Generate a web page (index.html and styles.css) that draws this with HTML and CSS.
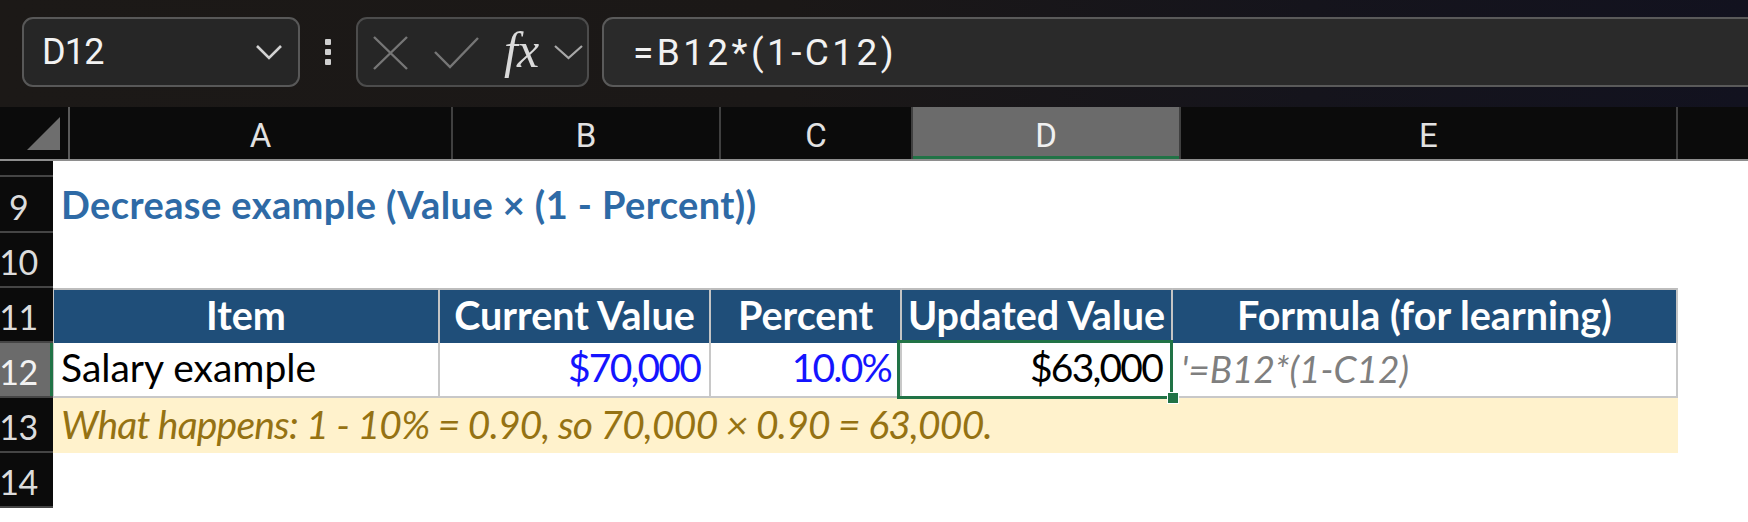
FILE: index.html
```html
<!DOCTYPE html>
<html>
<head>
<meta charset="utf-8">
<link rel="stylesheet" href="styles.css">
</head>
<body>
<div class="toolbar">
  <div class="namebox">
    <span class="name">D12</span>
    <svg class="chev" width="28" height="16" viewBox="0 0 28 16"><polyline points="2,2 14,14 26,2" fill="none" stroke="#d2d2d2" stroke-width="2.6"/></svg>
  </div>
  <div class="dots"><i></i><i></i><i></i></div>
  <div class="fnbox">
    <svg class="ic-x" width="35" height="34" viewBox="0 0 35 34"><path d="M1 1 L34 33 M34 1 L1 33" stroke="#767676" stroke-width="2.4" fill="none"/></svg>
    <svg class="ic-check" width="45" height="32" viewBox="0 0 45 32"><polyline points="1,15 16,30 44,1" fill="none" stroke="#767676" stroke-width="2.4"/></svg>
    <span class="fx">fx</span>
    <svg class="ic-chev2" width="29" height="15" viewBox="0 0 29 15"><polyline points="1,1 14.5,13 28,1" fill="none" stroke="#a8a8a8" stroke-width="2.2"/></svg>
  </div>
  <div class="formula"><span class="ftext">=B12*(1-C12)</span></div>
</div>

<div class="colheads">
  <div class="ch corner"><svg width="33" height="33" viewBox="0 0 33 33"><polygon points="33,0 33,33 0,33" fill="#6e6e6e"/></svg></div>
  <div class="ch w-a">A</div>
  <div class="ch w-b">B</div>
  <div class="ch w-c">C</div>
  <div class="ch w-d sel">D</div>
  <div class="ch w-e">E</div>
  <div class="ch w-rest"></div>
</div>

<div class="sheet">
  <div class="rh"></div>
  <div class="blank span6"></div>

  <div class="rh">9</div>
  <div class="cell title span6">Decrease example (Value × (1 - Percent))</div>

  <div class="rh">10</div>
  <div class="blank span6"></div>

  <div class="rh">11</div>
  <div class="cell th first">Item</div>
  <div class="cell th">Current Value</div>
  <div class="cell th">Percent</div>
  <div class="cell th">Updated Value</div>
  <div class="cell th">Formula (for learning)</div>
  <div class="blank"></div>

  <div class="rh rh-sel">12</div>
  <div class="cell td first">Salary example</div>
  <div class="cell td num blue">$70,000</div>
  <div class="cell td num blue">10.0%</div>
  <div class="cell td num active">$63,000<span class="handle"></span></div>
  <div class="cell td formula-text">'=B12*(1-C12)</div>
  <div class="blank"></div>

  <div class="rh">13</div>
  <div class="cell note span5">What happens: 1 - 10% = 0.90, so 70,000 × 0.90 = 63,000.</div>
  <div class="blank"></div>

  <div class="rh">14</div>
  <div class="blank span6"></div>
</div>
</body>
</html>
```

FILE: styles.css
```css
* {
  box-sizing: border-box;
  margin: 0;
  padding: 0;
}

html, body {
  width: 1748px;
  height: 522px;
  overflow: hidden;
  background: #ffffff;
}

body {
  font-family: Lato, "Liberation Sans", sans-serif;
}

/* ---------- formula toolbar ---------- */
.toolbar {
  height: 107px;
  display: flex;
  align-items: flex-start;
  padding: 17px 0 0 22px;
  background: linear-gradient(90deg, #1c1917 0%, #1b1817 45%, #15141c 75%, #12121f 100%);
  overflow: hidden;
}

.namebox {
  width: 278px;
  height: 70px;
  flex: none;
  border: 2px solid #585858;
  border-radius: 11px;
  background: #262626;
  display: flex;
  align-items: center;
  justify-content: space-between;
  padding: 0 15px 0 18px;
}

.name {
  font-family: Roboto, "Liberation Sans", sans-serif;
  font-size: 36px;
  color: #f2f2f2;
  letter-spacing: -0.8px;
}

.dots {
  width: 56px;
  height: 70px;
  flex: none;
  display: flex;
  flex-direction: column;
  align-items: center;
  justify-content: center;
  gap: 4px;
}

.dots i {
  display: block;
  width: 6px;
  height: 6px;
  border-radius: 1px;
  background: #cfcfcf;
}

.fnbox {
  width: 233px;
  height: 70px;
  flex: none;
  border: 2px solid #4c4c4c;
  border-radius: 11px;
  background: #262626;
  display: flex;
  align-items: center;
  padding-left: 15px;
}

.ic-x { margin-top: 1px; flex: none; }
.ic-check { margin-left: 26px; margin-top: 2px; flex: none; }

.fx {
  margin-left: 25px;
  font-family: "Liberation Serif", "DejaVu Serif", serif;
  font-style: italic;
  font-size: 50px;
  line-height: 1;
  color: #dadada;
  width: 42px;
  margin-top: -4px;
  letter-spacing: -1px;
  flex: none;
}

.ic-chev2 { margin-left: 8px; margin-top: 1px; flex: none; }

.formula {
  flex: 1;
  height: 70px;
  margin-left: 13px;
  margin-right: -30px;
  border: 2px solid #5a5a5a;
  border-radius: 11px;
  background: #2a2a2a;
  display: flex;
  align-items: center;
  padding-left: 29px;
}

.ftext {
  font-family: Roboto, "Liberation Sans", sans-serif;
  font-size: 37px;
  color: #f2f2f2;
  letter-spacing: 3.4px;
}

/* ---------- column headers ---------- */
.colheads {
  height: 54px;
  display: flex;
  background: #0b0b0b;
  border-bottom: 2px solid #8e8e8e;
}

.ch {
  flex: none;
  height: 52px;
  border-right: 2px solid #404040;
  display: flex;
  align-items: center;
  justify-content: center;
  font-family: Roboto, "Liberation Sans", sans-serif;
  font-size: 33px;
  color: #e2e2e2;
  padding-top: 4px;
}

.corner {
  width: 70px;
  align-items: flex-end;
  justify-content: flex-end;
  padding: 0 8px 9px 0;
  border-right-color: #5a5a5a;
}

.w-a { width: 383px; }
.w-b { width: 268px; }
.w-c { width: 192px; }
.w-d { width: 268px; }
.w-e { width: 497px; }
.w-rest { flex: 1; border-right: none; }

.ch.sel {
  background: #6b6b6b;
  color: #f0f0f0;
  box-shadow: inset 0 -3px 0 #217346;
}

/* ---------- sheet grid ---------- */
.sheet {
  display: grid;
  grid-template-columns: 53px 387px 271px 191px 271px 505px 1fr;
  grid-template-rows: 16px 56px 55px 55px 55px 55px 55px;
}

.span6 { grid-column: span 6; }
.span5 { grid-column: span 5; }

.rh {
  background: #0b0b0b;
  border-bottom: 2px solid #454545;
  color: #dcdcdc;
  font-size: 34px;
  display: flex;
  align-items: flex-end;
  justify-content: center;
  padding: 0 16px 7px 0;
  line-height: 1;
  letter-spacing: -0.5px;
}

.rh-sel {
  background: #6b6b6b;
  color: #f2f2f2;
  box-shadow: inset -3px 0 0 #217346;
}

.blank { background: #ffffff; }

.cell {
  display: flex;
  align-items: flex-end;
  font-size: 39px;
  line-height: 1;
  padding: 0 7px 9px 7px;
  white-space: nowrap;
  color: #000000;
}

.title {
  font-weight: 700;
  color: #2e6aa6;
  font-size: 38px;
  letter-spacing: 0.4px;
  padding-left: 8px;
  padding-bottom: 10px;
}

.th {
  background: #1f4e79;
  color: #ffffff;
  font-weight: 700;
  font-size: 39.5px;
  justify-content: center;
  border-top: 2px solid #bdbdbd;
  border-right: 2px solid #c4c4c4;
  padding-bottom: 9px;
}

.td {
  border-right: 2px solid #c8c8c8;
  border-bottom: 2px solid #c8c8c8;
}

.first { border-left: 1px solid #c8c8c8; }

.num {
  justify-content: flex-end;
  letter-spacing: -1.8px;
  padding-right: 9px;
}
.blue { color: #1414ff; }

.active { position: relative; }

.active::after {
  content: "";
  position: absolute;
  left: -5px;
  right: -2px;
  top: -3px;
  bottom: -3px;
  border: 3px solid #217346;
  pointer-events: none;
}

.handle {
  position: absolute;
  right: -8px;
  bottom: -8px;
  width: 12px;
  height: 12px;
  background: #217346;
  border: 1px solid #ffffff;
  z-index: 2;
}

.formula-text {
  font-style: italic;
  color: #7f7f7f;
  font-size: 37px;
  padding-left: 8px;
}

.note {
  background: #fff2cc;
  font-style: italic;
  color: #957213;
  letter-spacing: -0.8px;
  padding-left: 8px;
}
```
